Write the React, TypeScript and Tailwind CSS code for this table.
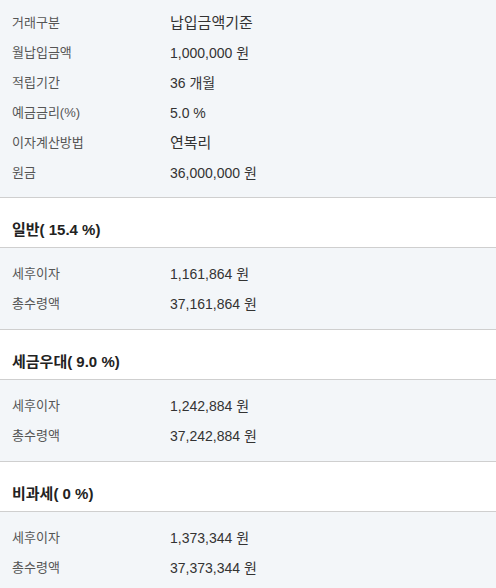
const font = { fontFamily: '"Liberation Sans", "Noto Sans CJK KR", sans-serif' };

type Row = { label: string; value: string; big?: boolean };

const baseRows: Row[] = [
  { label: '거래구분', value: '납입금액기준', big: true },
  { label: '월납입금액', value: '1,000,000 원' },
  { label: '적립기간', value: '36 개월' },
  { label: '예금금리(%)', value: '5.0 %' },
  { label: '이자계산방법', value: '연복리', big: true },
  { label: '원금', value: '36,000,000 원' },
];

const sections = [
  { title: '일반( 15.4 %)', interest: '1,161,864 원', total: '37,161,864 원' },
  { title: '세금우대( 9.0 %)', interest: '1,242,884 원', total: '37,242,884 원' },
  { title: '비과세( 0 %)', interest: '1,373,344 원', total: '37,373,344 원' },
];

function InfoRow({ row }: { row: Row }) {
  return (
    <div className="flex items-center h-[30px]">
      <div className="w-[170px] shrink-0 pl-3 text-[13px] text-[#555]">{row.label}</div>
      <div className={`${row.big ? 'text-[15px]' : 'text-[14px]'} text-[#333]`}>{row.value}</div>
    </div>
  );
}

export default function App() {
  return (
    <div className="w-[496px] h-[588px] bg-white overflow-hidden" style={font}>
      {/* 기본 정보 */}
      <div className="bg-[#f3f6f9] pt-[8px] pb-[9px] border-b border-[#cfcfcf]">
        {baseRows.map((r) => (
          <InfoRow key={r.label} row={r} />
        ))}
      </div>

      {sections.map((s) => (
        <div key={s.title}>
          <div className="pt-[22px] pb-[8px] pl-3 leading-[19px] text-[15px] font-bold text-[#222] border-b border-[#cfcfcf]">
            {s.title}
          </div>
          <div className="bg-[#f3f6f9] pt-[11px] pb-[10px] border-b border-[#cfcfcf]">
            <InfoRow row={{ label: '세후이자', value: s.interest }} />
            <InfoRow row={{ label: '총수령액', value: s.total }} />
          </div>
        </div>
      ))}
    </div>
  );
}
